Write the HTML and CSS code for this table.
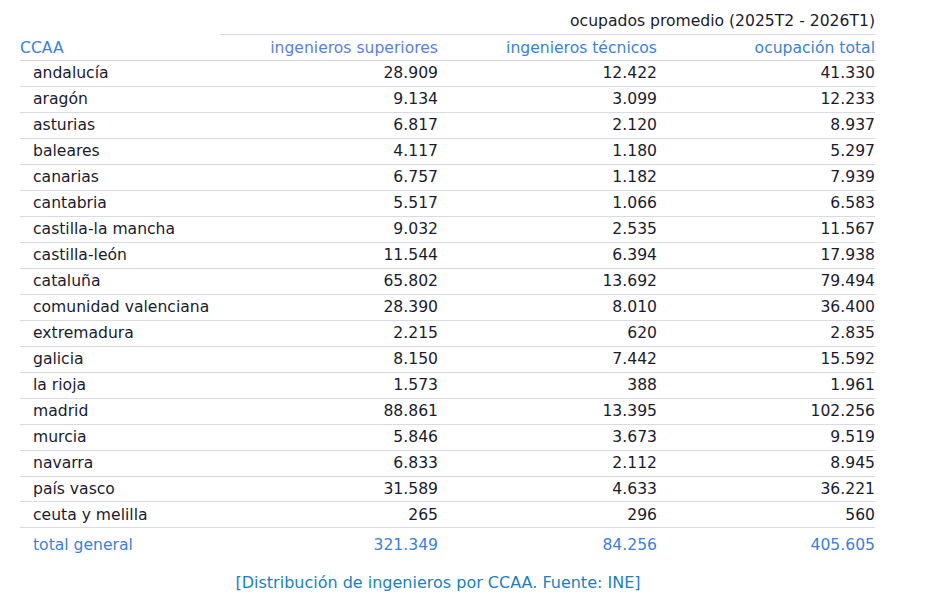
FILE: index.html
```html
<!DOCTYPE html>
<html lang="es">
<head>
<meta charset="utf-8">
<title>Distribución de ingenieros por CCAA</title>
<link rel="stylesheet" href="styles.css">
</head>
<body>
<div class="wrap">
<table class="tbl">
  <colgroup>
    <col class="c-name">
    <col class="c-sup">
    <col class="c-tec">
    <col class="c-tot">
  </colgroup>
  <thead>
    <tr class="super"><th></th><th colspan="3" class="super-cell">ocupados promedio (2025T2 - 2026T1)</th></tr>
    <tr class="head"><th class="h-name">CCAA</th><th class="h-sup">ingenieros superiores</th><th>ingenieros técnicos</th><th>ocupación total</th></tr>
  </thead>
  <tbody>
    <tr><td>andalucía</td><td>28.909</td><td>12.422</td><td>41.330</td></tr>
    <tr><td>aragón</td><td>9.134</td><td>3.099</td><td>12.233</td></tr>
    <tr><td>asturias</td><td>6.817</td><td>2.120</td><td>8.937</td></tr>
    <tr><td>baleares</td><td>4.117</td><td>1.180</td><td>5.297</td></tr>
    <tr><td>canarias</td><td>6.757</td><td>1.182</td><td>7.939</td></tr>
    <tr><td>cantabria</td><td>5.517</td><td>1.066</td><td>6.583</td></tr>
    <tr><td>castilla-la mancha</td><td>9.032</td><td>2.535</td><td>11.567</td></tr>
    <tr><td>castilla-león</td><td>11.544</td><td>6.394</td><td>17.938</td></tr>
    <tr><td>cataluña</td><td>65.802</td><td>13.692</td><td>79.494</td></tr>
    <tr><td>comunidad valenciana</td><td>28.390</td><td>8.010</td><td>36.400</td></tr>
    <tr><td>extremadura</td><td>2.215</td><td>620</td><td>2.835</td></tr>
    <tr><td>galicia</td><td>8.150</td><td>7.442</td><td>15.592</td></tr>
    <tr><td>la rioja</td><td>1.573</td><td>388</td><td>1.961</td></tr>
    <tr><td>madrid</td><td>88.861</td><td>13.395</td><td>102.256</td></tr>
    <tr><td>murcia</td><td>5.846</td><td>3.673</td><td>9.519</td></tr>
    <tr><td>navarra</td><td>6.833</td><td>2.112</td><td>8.945</td></tr>
    <tr><td>país vasco</td><td>31.589</td><td>4.633</td><td>36.221</td></tr>
    <tr><td>ceuta y melilla</td><td>265</td><td>296</td><td>560</td></tr>
  </tbody>
  <tfoot>
    <tr class="total"><td>total general</td><td>321.349</td><td>84.256</td><td>405.605</td></tr>
  </tfoot>
</table>
<p class="caption">[Distribución de ingenieros por CCAA. Fuente: INE]</p>
</div>
</body>
</html>
```
FILE: styles.css
```css
html, body {
  margin: 0;
  padding: 0;
  background: #ffffff;
}
body {
  font-family: "DejaVu Sans", "Noto Sans", sans-serif;
  font-size: 15.6px;
  color: #1b1b30;
}
.wrap {
  padding: 8px 0 0 20px;
  width: 855px;
}
.tbl {
  width: 855px;
  border-collapse: collapse;
  table-layout: fixed;
}
.c-name { width: 200px; }
.c-sup { width: 218px; }
.c-tec { width: 219px; }
.c-tot { width: 218px; }
.tbl th, .tbl td {
  padding: 0;
  white-space: nowrap;
  line-height: 18px;
}
.tbl th {
  font-weight: normal;
  text-align: right;
}
.super th {
  height: 26px;
  vertical-align: middle;
}
.super-cell {
  color: #1b1b30;
  border-bottom: 1px solid #d8dbe6;
}
.head th {
  height: 24px;
  padding-top: 1px;
  color: #3b7fe0;
  border-bottom: 1px solid #d3d6e2;
}
.head .h-name { text-align: left; }
.head .h-sup { color: #5a7ee6; }
.tbl td {
  height: 24.97px;
  text-align: right;
  border-bottom: 1px solid #d8dbe6;
}
.tbl td:first-child {
  text-align: left;
  padding-left: 13px;
}
.total td {
  height: 32px;
  padding-top: 1px;
  color: #3b7fe0;
  border-bottom: none;
}
.caption {
  margin: 12px 0 0;
  padding-right: 19px;
  text-align: center;
  font-size: 16px;
  color: #1a80c4;
}
```
